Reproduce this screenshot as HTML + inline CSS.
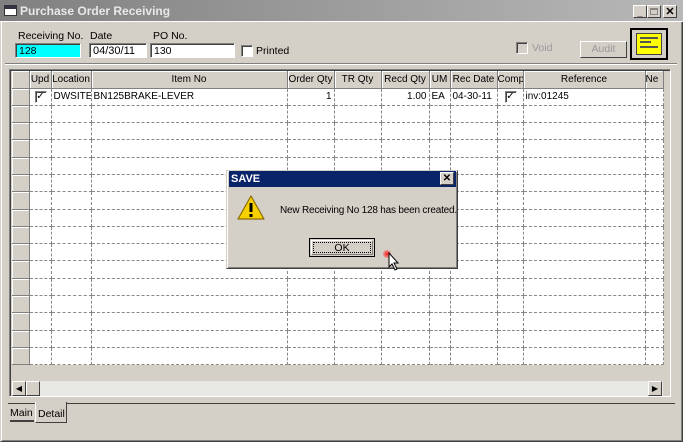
<!DOCTYPE html>
<html><head><style>
*{margin:0;padding:0;box-sizing:border-box}
body{width:683px;height:442px;background:#d4d0c8;font-family:"Liberation Sans",sans-serif;font-size:10.5px;position:relative;overflow:hidden;color:#000}
.a{position:absolute}
.title{left:0;top:0;width:683px;height:22px;background:linear-gradient(90deg,#808080,#b8b8b8);color:#e8e8e8;font-weight:bold;font-size:12px;line-height:22px;padding-left:20px;border-bottom:1px solid #fff}
.btn{background:#d4d0c8;border:1px solid;border-color:#fff #404040 #404040 #fff}
.inp{background:#fff;border:1px solid;border-color:#808080 #fff #fff #808080;box-shadow:inset 1px 1px 0 #404040;padding-left:3px;line-height:14px;font-size:10.5px}
.chk{width:12px;height:12px;background:#fff;border:1px solid;border-color:#808080 #fff #fff #808080;box-shadow:inset 1px 1px 0 #404040;font-size:10px;line-height:10px;text-align:center}
table{border-collapse:collapse;table-layout:fixed;position:absolute;left:12px;top:71px;background:#fff;width:651px}
td{border-right:1px dashed #888;border-bottom:1px dashed #888;height:17.3px;padding:0 2px;white-space:nowrap;overflow:hidden;font-size:10px}
th{background:#d4d0c8;font-weight:normal;height:17px;padding:0;border-right:1px solid #808080;border-bottom:1px solid #808080;box-shadow:inset 1px 1px 0 #fff;font-size:10px;white-space:nowrap;overflow:hidden}
td.s{background:#d4d0c8;border-right:1px solid #808080;border-bottom:1px solid #808080;box-shadow:inset 1px 1px 0 #fff}
.r{text-align:right}
</style></head><body>
<div class="a" style="left:0;top:0;width:683px;height:442px;border:1px solid;border-color:#d4d0c8 #404040 #404040 #d4d0c8;box-shadow:inset 1px 1px 0 #fff,inset -1px -1px 0 #808080"></div>
<div class="a title">Purchase Order Receiving</div>
<div class="a" style="left:4px;top:5px;width:13px;height:11px;background:#fff;border:1px solid #333"><div style="height:3px;background:#334"></div></div>
<div class="a btn" style="left:633px;top:5px;width:14px;height:13px;font-size:9px;text-align:center;line-height:14px;font-weight:bold">_</div>
<div class="a btn" style="left:647px;top:5px;width:14px;height:13px"><div style="margin:2px;width:8px;height:7px;border:1px solid #888;border-top-width:2px"></div></div>
<div class="a btn" style="left:663px;top:5px;width:14px;height:13px;font-size:11px;text-align:center;line-height:12px;font-weight:bold">✕</div>
<div class="a" style="left:18px;top:30px">Receiving No.</div>
<div class="a" style="left:90px;top:30px">Date</div>
<div class="a" style="left:153px;top:30px">PO No.</div>
<div class="a inp" style="left:15px;top:43px;width:66px;height:15px;background:#00ffff">128</div>
<div class="a inp" style="left:89px;top:43px;width:58px;height:15px;font-size:11px">04/30/11</div>
<div class="a inp" style="left:150px;top:43px;width:85px;height:15px">130</div>
<div class="a chk" style="left:241px;top:45px"></div>
<div class="a" style="left:256px;top:45px">Printed</div>
<div class="a chk" style="left:516px;top:42px;background:#d4d0c8"></div>
<div class="a" style="left:532px;top:42px;color:#999">Void</div>
<div class="a btn" style="left:580px;top:41px;width:47px;height:17px;color:#999;text-align:center;line-height:15px">Audit</div>
<div class="a" style="left:630px;top:28px;width:38px;height:32px;border:2px solid #000;background:#d4d0c8"><div style="margin:3px 4px;height:22px;background:#ff0;border:1px solid #444;padding:3px"><div style="height:2px;background:#555;margin-bottom:2px"></div><div style="height:2px;width:60%;background:#555;margin-bottom:3px"></div><div style="height:2px;background:#555"></div></div></div>
<div class="a" style="left:5px;top:63px;width:672px;height:2px;border-top:1px solid #808080;border-bottom:1px solid #fff"></div>
<div class="a" style="left:9px;top:69px;width:662px;height:328px;border:1px solid;border-color:#808080 #fff #fff #808080;box-shadow:inset 1px 1px 0 #404040;background:#d4d0c8"></div>
<table>
<colgroup><col style="width:17px"><col style="width:22px"><col style="width:40px"><col style="width:196px"><col style="width:47px"><col style="width:47px"><col style="width:48px"><col style="width:21px"><col style="width:47px"><col style="width:26px"><col style="width:122px"><col style="width:18px"></colgroup>
<tr><th></th><th>Upd</th><th>Location</th><th>Item No</th><th>Order Qty</th><th>TR Qty</th><th>Recd Qty</th><th>UM</th><th>Rec Date</th><th>Comp</th><th>Reference</th><th style="text-align:left">Ne</th></tr>
<tr><td class="s"></td><td><div class="chk" style="margin-left:3px">✓</div></td><td>DWSITE</td><td>BN125BRAKE-LEVER</td><td class="r">1</td><td></td><td class="r">1.00</td><td>EA</td><td>04-30-11</td><td><div class="chk" style="margin-left:5px">✓</div></td><td>inv:01245</td><td></td></tr>
<tr><td class="s"></td><td></td><td></td><td></td><td></td><td></td><td></td><td></td><td></td><td></td><td></td><td></td></tr>
<tr><td class="s"></td><td></td><td></td><td></td><td></td><td></td><td></td><td></td><td></td><td></td><td></td><td></td></tr>
<tr><td class="s"></td><td></td><td></td><td></td><td></td><td></td><td></td><td></td><td></td><td></td><td></td><td></td></tr>
<tr><td class="s"></td><td></td><td></td><td></td><td></td><td></td><td></td><td></td><td></td><td></td><td></td><td></td></tr>
<tr><td class="s"></td><td></td><td></td><td></td><td></td><td></td><td></td><td></td><td></td><td></td><td></td><td></td></tr>
<tr><td class="s"></td><td></td><td></td><td></td><td></td><td></td><td></td><td></td><td></td><td></td><td></td><td></td></tr>
<tr><td class="s"></td><td></td><td></td><td></td><td></td><td></td><td></td><td></td><td></td><td></td><td></td><td></td></tr>
<tr><td class="s"></td><td></td><td></td><td></td><td></td><td></td><td></td><td></td><td></td><td></td><td></td><td></td></tr>
<tr><td class="s"></td><td></td><td></td><td></td><td></td><td></td><td></td><td></td><td></td><td></td><td></td><td></td></tr>
<tr><td class="s"></td><td></td><td></td><td></td><td></td><td></td><td></td><td></td><td></td><td></td><td></td><td></td></tr>
<tr><td class="s"></td><td></td><td></td><td></td><td></td><td></td><td></td><td></td><td></td><td></td><td></td><td></td></tr>
<tr><td class="s"></td><td></td><td></td><td></td><td></td><td></td><td></td><td></td><td></td><td></td><td></td><td></td></tr>
<tr><td class="s"></td><td></td><td></td><td></td><td></td><td></td><td></td><td></td><td></td><td></td><td></td><td></td></tr>
<tr><td class="s"></td><td></td><td></td><td></td><td></td><td></td><td></td><td></td><td></td><td></td><td></td><td></td></tr>
<tr><td class="s"></td><td></td><td></td><td></td><td></td><td></td><td></td><td></td><td></td><td></td><td></td><td></td></tr>
</table>
<div class="a" style="left:12px;top:381px;width:651px;height:15px;background:#e8e8e4"></div>
<div class="a btn" style="left:12px;top:381px;width:14px;height:15px;font-size:8px;text-align:center;line-height:13px">◀</div>
<div class="a btn" style="left:26px;top:381px;width:14px;height:15px"></div>
<div class="a btn" style="left:648px;top:381px;width:14px;height:15px;font-size:8px;text-align:center;line-height:13px">▶</div>
<div class="a" style="left:8px;top:403px;width:667px;height:2px;border-top:1px solid #404040"></div>
<div class="a" style="left:10px;top:404px;width:24px;height:18px;border-bottom:2px solid #404040;line-height:18px">Main</div>
<div class="a" style="left:35px;top:402px;width:32px;height:21px;border:1px solid;border-color:#fff #404040 #404040 #fff;border-top:none;background:#d4d0c8;line-height:24px;padding-left:2px">Detail</div>
<div class="a" style="left:226px;top:170px;width:232px;height:99px;background:#d4d0c8;border:1px solid;border-color:#d4d0c8 #404040 #404040 #d4d0c8;box-shadow:inset 1px 1px 0 #fff,inset -1px -1px 0 #808080"></div>
<div class="a" style="left:229px;top:171px;width:227px;height:16px;background:#0a246a;color:#fff;font-weight:bold;font-size:11px;line-height:16px;padding-left:2px">SAVE</div>
<div class="a btn" style="left:440px;top:172px;width:14px;height:13px;font-size:10px;text-align:center;line-height:12px;font-weight:bold">✕</div>
<svg class="a" style="left:237px;top:195px" width="28" height="26"><path d="M14 1 L27 24 L1 24 Z" fill="#f6d000" stroke="#8a6a00" stroke-width="1.2" stroke-linejoin="round"/><rect x="12.5" y="8" width="3" height="9" fill="#000"/><rect x="12.5" y="19" width="3" height="3" fill="#000"/></svg>
<div class="a" style="left:280px;top:205px;font-size:10px;letter-spacing:-0.2px">New Receiving No 128 has been created.</div>
<div class="a" style="left:309px;top:238px;width:66px;height:19px;border:1px solid #000;background:#d4d0c8"><div style="margin:1px;height:15px;border:1px solid;border-color:#fff #808080 #808080 #fff"><div style="margin:1px;height:11px;border:1px dotted #000;text-align:center;line-height:10px">OK</div></div></div>
<div class="a" style="left:383px;top:250px;width:8px;height:8px;border-radius:50%;background:radial-gradient(#ff2020,rgba(255,0,0,0))"></div>
<svg class="a" style="left:388px;top:252px" width="14" height="20"><path d="M1 1 L1 15 L4 12 L7 18 L9 17 L6 11 L10 11 Z" fill="#fff" stroke="#000"/></svg>
</body></html>
